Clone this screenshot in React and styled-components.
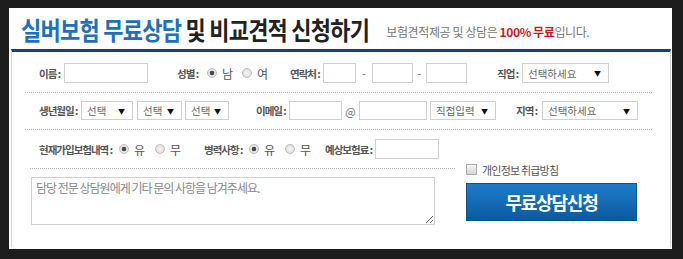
import React from "react";
import styled, { createGlobalStyle } from "styled-components";

const GlobalStyle = createGlobalStyle`
  html, body {
    margin: 0;
    padding: 0;
    background: #1d1d1d;
  }
  body {
    font-family: "Noto Sans CJK KR", "Noto Sans", sans-serif;
  }
`;

const Panel = styled.div`
  width: 663px;
  height: 241px;
  margin: 8px 0 0 9px;
  padding: 0 1px 2px 2px;
  box-sizing: border-box;
  background: #fff;
  display: flex;
  flex-direction: column;
`;

const Header = styled.div`
  height: 41px;
  flex-shrink: 0;
  display: flex;
  align-items: center;
  padding: 0 0 2px 10px;
  box-sizing: border-box;
`;

const Title = styled.h1`
  margin: 0;
  display: inline-block;
  font-size: 22px;
  line-height: 1;
  font-weight: 700;
  letter-spacing: -0.75px;
  color: #222;
  transform: scaleY(1.15);
  white-space: nowrap;
`;

const Accent = styled.span`
  color: #1d6fc2;
`;

const Sub = styled.p`
  margin: 7px 0 0 17px;
  font-size: 12px;
  letter-spacing: -0.4px;
  color: #777;
  white-space: nowrap;
`;

const Free = styled.strong`
  color: #d0161e;
`;

const FormBox = styled.div`
  flex: 1;
  border-top: 3px solid #1c3d80;
  border-left: 1px solid #d4d4d4;
  border-right: 1px solid #d4d4d4;
`;

const Row = styled.div`
  display: flex;
  align-items: center;
  margin: 0 18px 0 13px;
  padding: ${(p) => p.$pad};
  padding-left: 14px;
  height: ${(p) => p.$h}px;
  box-sizing: content-box;
  border-bottom: ${(p) => (p.$line ? "1px dotted #b5b5b5" : "none")};
`;

const Field = styled.div`
  display: flex;
  align-items: center;
  flex: ${(p) => (p.$w ? `0 0 ${p.$w}px` : "0 0 auto")};
`;

const Label = styled.label`
  flex: 0 0 ${(p) => p.$w}px;
  font-size: 10.5px;
  font-weight: 700;
  letter-spacing: -1px;
  color: #555;
  white-space: nowrap;
`;

const TextInput = styled.input`
  width: ${(p) => p.$w}px;
  height: ${(p) => p.$h || 20}px;
  margin: 0;
  padding: 0 4px;
  box-sizing: border-box;
  border: 1px solid #cfcfcf;
  background: #fff;
  outline: none;
  font: 11px "Noto Sans CJK KR", sans-serif;
`;

const SelectBox = styled.div`
  width: ${(p) => p.$w}px;
  height: ${(p) => p.$h || 19}px;
  margin-left: ${(p) => p.$ml || 0}px;
  padding: 0 7px 0 5px;
  box-sizing: border-box;
  border: 1px solid #cfcfcf;
  display: flex;
  align-items: center;
  justify-content: space-between;
  font-size: 10.5px;
  letter-spacing: 0;
  color: #666;
  white-space: nowrap;
`;

const Arrow = styled.span`
  font-size: 7px;
  color: #111;
`;

const Sep = styled.span`
  flex: 0 0 ${(p) => p.$w}px;
  text-align: center;
  font-size: 11px;
  color: #777;
`;

const Option = styled.span`
  display: flex;
  align-items: center;
  margin-right: ${(p) => p.$gap || 0}px;
  font-size: 12px;
  color: #555;
`;

const Radio = styled.span`
  width: 10px;
  height: 10px;
  margin-right: 5px;
  border-radius: 50%;
  border: 1px solid #bdbdbd;
  box-sizing: border-box;
  background: ${(p) =>
    p.$checked
      ? "radial-gradient(circle, #4a4a4a 0 2px, #e6e6e6 2.6px)"
      : "radial-gradient(circle, #f4f4f4 0, #d9d9d9 100%)"};
`;

const Bottom = styled.div`
  display: flex;
  margin-top: 5px;
  padding-left: 18px;
`;

const LeftCol = styled.div`
  width: 425px;
  padding-top: 4px;
`;

const Divider = styled.div`
  border-top: 1px dotted #b5b5b5;
  padding: 8px 0 0 1px;
`;

const Memo = styled.textarea`
  display: block;
  width: 404px;
  height: 48px;
  margin: 0;
  padding: 3px 4px;
  box-sizing: border-box;
  border: 1px solid #cfcfcf;
  outline: none;
  font: 12px/14px "Noto Sans CJK KR", sans-serif;
  letter-spacing: -1px;
  color: #888;
  &::placeholder {
    color: #888;
  }
`;

const RightCol = styled.div`
  width: 171px;
  margin-left: 11px;
`;

const Agree = styled.label`
  height: 11px;
  display: flex;
  align-items: center;
  font-size: 11px;
  letter-spacing: -0.8px;
  color: #555;
`;

const Check = styled.span`
  width: 9px;
  height: 9px;
  margin-right: 5px;
  border: 1px solid #aaa;
  background: linear-gradient(#f5f5f5, #d6d6d6);
`;

const Submit = styled.button`
  width: 171px;
  height: 38px;
  margin-top: 8px;
  border: 1px solid #0b5293;
  background: linear-gradient(#1d7ccb, #0c5a9e);
  color: #fff;
  font: 700 18px "Noto Sans CJK KR", sans-serif;
  letter-spacing: -1.2px;
  cursor: pointer;
`;

const Select = ({ w, h, ml, children }) => (
  <SelectBox $w={w} $h={h} $ml={ml}>
    <span>{children}</span>
    <Arrow>▼</Arrow>
  </SelectBox>
);

const RadioPair = ({ a, b, gap }) => (
  <>
    <Option $gap={gap}>
      <Radio $checked />
      {a}
    </Option>
    <Option>
      <Radio />
      {b}
    </Option>
  </>
);

export default function App() {
  return (
    <>
      <GlobalStyle />
      <Panel>
        <Header>
          <Title>
            <Accent>실버보험 무료상담</Accent> 및 비교견적 신청하기
          </Title>
          <Sub>
            보험견적제공 및 상담은 <Free>100% 무료</Free>입니다.
          </Sub>
        </Header>
        <FormBox>
          <Row $pad="11px 0 9px" $h={20} $line>
            <Field $w={138}>
              <Label $w={25}>이름 :</Label>
              <TextInput $w={84} />
            </Field>
            <Field $w={113}>
              <Label $w={30}>성별 :</Label>
              <RadioPair a="남" b="여" gap={9} />
            </Field>
            <Field $w={207}>
              <Label $w={33}>연락처 :</Label>
              <TextInput $w={33} />
              <Sep $w={16}>-</Sep>
              <TextInput $w={41} />
              <Sep $w={13}>-</Sep>
              <TextInput $w={41} />
            </Field>
            <Field>
              <Label $w={25}>직업 :</Label>
              <Select w={87} h={20}>
                선택하세요
              </Select>
            </Field>
          </Row>
          <Row $pad="8px 0 9px" $h={19} $line>
            <Field $w={217}>
              <Label $w={42}>생년월일 :</Label>
              <Select w={52}>선택</Select>
              <Select w={45} ml={4}>
                선택
              </Select>
              <Select w={44} ml={3}>
                선택
              </Select>
            </Field>
            <Field $w={260}>
              <Label $w={33}>이메일 :</Label>
              <TextInput $w={53} $h={19} />
              <Sep $w={17}>@</Sep>
              <TextInput $w={68} $h={19} />
              <Select w={66} ml={3}>
                직접입력
              </Select>
            </Field>
            <Field>
              <Label $w={26}>지역 :</Label>
              <Select w={96}>선택하세요</Select>
            </Field>
          </Row>
          <Row $pad="9px 0 0" $h={20}>
            <Field $w={165}>
              <Label $w={80}>현재가입보험내역 :</Label>
              <RadioPair a="유" b="무" gap={10} />
            </Field>
            <Field $w={121}>
              <Label $w={45}>병력사항 :</Label>
              <RadioPair a="유" b="무" gap={10} />
            </Field>
            <Field>
              <Label $w={50}>예상보험료 :</Label>
              <TextInput $w={64} />
            </Field>
          </Row>
          <Bottom>
            <LeftCol>
              <Divider>
                <Memo placeholder="담당 전문 상담원에게 기타 문의 사항을 남겨주세요." />
              </Divider>
            </LeftCol>
            <RightCol>
              <Agree>
                <Check />
                개인정보 취급방침
              </Agree>
              <Submit>무료상담신청</Submit>
            </RightCol>
          </Bottom>
        </FormBox>
      </Panel>
    </>
  );
}
